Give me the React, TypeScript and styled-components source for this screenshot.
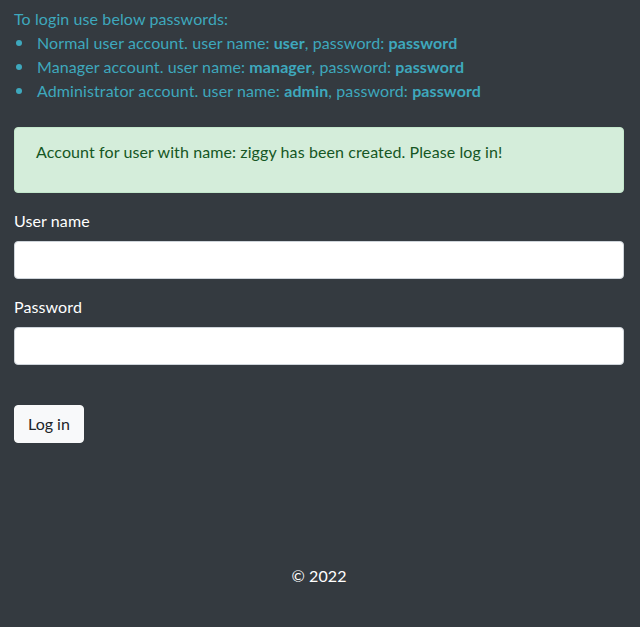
import React from "react";
import styled, {createGlobalStyle} from "styled-components";

const GlobalStyle = createGlobalStyle`
  html, body {
    margin: 0;
    padding: 0;
    background: #343a40;
  }

  body {
    font-family: "Segoe UI", Lato, "Liberation Sans", sans-serif;
    font-size: 16px;
    line-height: 24px;
    letter-spacing: 0.1px;
    color: #fff;
  }
`

const Page = styled.div`
  min-height: 627px;
  box-sizing: border-box;
  padding: 7px 16px 0 14px;
  display: flex;
  flex-direction: column;
`

const Info = styled.div`
  color: #3ea8bd;
  margin-bottom: 24px;
`

const InfoList = styled.ul`
  margin: 0;
  padding-left: 23px;
  list-style: none;
`

const InfoItem = styled.li`
  position: relative;

  &::before {
    content: "";
    position: absolute;
    left: -21px;
    top: 9px;
    width: 6px;
    height: 6px;
    border-radius: 50%;
    background: #3ea8bd;
  }
`

const Alert = styled.div`
  background: #d4edda;
  color: #155724;
  border: 1px solid #c3e6cb;
  border-radius: 4px;
  padding: 12px 20px 28px 21px;
  margin-bottom: 16px;
`

const FormGroup = styled.div`
  margin-bottom: 16px;
`

const Label = styled.label`
  display: block;
  margin-bottom: 8px;
`

const Input = styled.input`
  display: block;
  width: 100%;
  height: 38px;
  box-sizing: border-box;
  border: 1px solid #ced4da;
  border-radius: 4px;
  background: #fff;
  padding: 6px 12px;
  font: inherit;
`

const Button = styled.button`
  align-self: flex-start;
  margin-top: 24px;
  height: 38px;
  padding: 6px 13px;
  border: 1px solid #f8f9fa;
  border-radius: 4px;
  background: #f8f9fa;
  color: #212529;
  font: inherit;
`

const Footer = styled.footer`
  margin-top: 121px;
  text-align: center;
`

export default function App() {
    return (
        <>
            <GlobalStyle/>
            <Page>
                <Info>
                    To login use below passwords:
                    <InfoList>
                        <InfoItem>Normal user account. user name: <b>user</b>, password: <b>password</b></InfoItem>
                        <InfoItem>Manager account. user name: <b>manager</b>, password: <b>password</b></InfoItem>
                        <InfoItem>Administrator account. user name: <b>admin</b>, password: <b>password</b></InfoItem>
                    </InfoList>
                </Info>
                <Alert>Account for user with name: ziggy has been created. Please log in!</Alert>
                <FormGroup>
                    <Label>User name</Label>
                    <Input type="text"/>
                </FormGroup>
                <FormGroup>
                    <Label>Password</Label>
                    <Input type="password"/>
                </FormGroup>
                <Button>Log in</Button>
                <Footer>© 2022</Footer>
            </Page>
        </>
    );
}
